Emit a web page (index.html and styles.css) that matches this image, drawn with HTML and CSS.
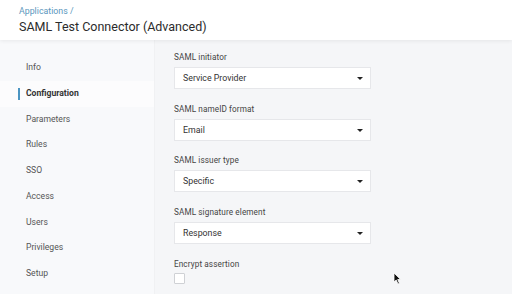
FILE: index.html
```html
<!DOCTYPE html>
<html>
<head>
<meta charset="utf-8">
<link rel="stylesheet" href="styles.css">
</head>
<body>
<header class="header">
  <div class="crumb">Applications /</div>
  <h1 class="title">SAML Test Connector (Advanced)</h1>
</header>
<div class="main">
  <nav class="sidebar">
    <div class="nav-item">Info</div>
    <div class="nav-item active">Configuration</div>
    <div class="nav-item">Parameters</div>
    <div class="nav-item">Rules</div>
    <div class="nav-item">SSO</div>
    <div class="nav-item">Access</div>
    <div class="nav-item">Users</div>
    <div class="nav-item">Privileges</div>
    <div class="nav-item">Setup</div>
  </nav>
  <section class="content">
    <div class="field">
      <div class="label">SAML initiator</div>
      <div class="select"><span>Service Provider</span><span class="caret"></span></div>
    </div>
    <div class="field">
      <div class="label">SAML nameID format</div>
      <div class="select"><span>Email</span><span class="caret"></span></div>
    </div>
    <div class="field">
      <div class="label">SAML issuer type</div>
      <div class="select"><span>Specific</span><span class="caret"></span></div>
    </div>
    <div class="field">
      <div class="label">SAML signature element</div>
      <div class="select"><span>Response</span><span class="caret"></span></div>
    </div>
    <div class="field">
      <div class="label">Encrypt assertion</div>
      <div class="checkbox"></div>
    </div>
    <svg class="cursor" width="9" height="13" viewBox="0 0 9 13"><path d="M1 1 L1 10 L3.2 8 L5 12 L6.4 11.3 L4.7 7.5 L7.6 7.5 Z" fill="#111" stroke="#fff" stroke-width="0.8"/></svg>
  </section>
</div>
</body>
</html>
```

FILE: styles.css
```css
* { box-sizing: border-box; }
html, body { margin: 0; padding: 0; }
body {
  width: 512px;
  height: 294px;
  overflow: hidden;
  font-family: Roboto, "Liberation Sans", sans-serif;
  background: #f6f7f9;
  color: #333;
}
.header {
  height: 40px;
  background: #fff;
  padding: 5px 0 0 19px;
  box-shadow: 0 1px 4px rgba(0,0,0,0.07);
  position: relative;
  z-index: 1;
}
.crumb {
  font-size: 8.8px;
  color: #5a97bd;
  line-height: 12px;
}
.title {
  margin: 0;
  font-weight: 400;
  font-size: 12.5px;
  line-height: 18px;
  color: #2b2b2b;
  margin-top: 1px;
}
.main {
  display: flex;
  height: 254px;
}
.sidebar {
  width: 155px;
  background: #f8f9fb;
  padding-top: 15px;
  border-right: 1px solid #f0f1f3;
}
.nav-item {
  height: 25.75px;
  line-height: 25.75px;
  padding-left: 26px;
  font-size: 8.6px;
  color: #555;
  position: relative;
}
.nav-item.active {
  font-weight: 700;
  color: #333;
  background: #fcfcfd;
}
.nav-item.active::before {
  content: "";
  position: absolute;
  left: 18px;
  top: 7px;
  width: 1.5px;
  height: 12px;
  background: #4b95c2;
}
.content {
  flex: 1;
  padding: 11px 0 0 19px;
  position: relative;
  background: #f5f6f8;
}
.field {
  margin-bottom: 13.7px;
}
.label {
  font-size: 8.2px;
  line-height: 12px;
  color: #444;
  margin-bottom: 4px;
  letter-spacing: 0.1px;
}
.select {
  width: 197px;
  height: 22px;
  background: #fff;
  border: 1px solid #e6e7ea;
  display: flex;
  align-items: center;
  justify-content: space-between;
  padding: 0 7px 0 8px;
  font-size: 8.8px;
  color: #333;
}
.caret {
  width: 0;
  height: 0;
  border-left: 3px solid transparent;
  border-right: 3px solid transparent;
  border-top: 3.5px solid #222;
  margin-top: 1px;
}
.checkbox {
  width: 11px;
  height: 11px;
  background: #fff;
  border: 1px solid #cfd1d5;
  border-radius: 1px;
  margin-top: -1px;
}
.cursor {
  position: absolute;
  left: 238px;
  top: 232px;
}
```
